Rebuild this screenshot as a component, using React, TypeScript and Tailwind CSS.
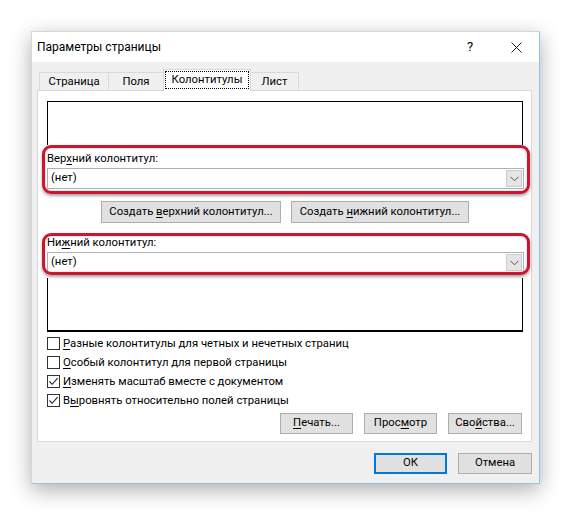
import React from "react";

const U = ({ children }: { children: React.ReactNode }) => (
  <span className="underline underline-offset-[2px] decoration-1">{children}</span>
);

function Btn({
  className,
  children,
  primary,
}: {
  className: string;
  children: React.ReactNode;
  primary?: boolean;
}) {
  return (
    <div
      className={
        "flex items-center justify-center bg-[#e1e1e1] text-black " +
        (primary ? "border-2 border-[#0078d7] " : "border border-[#adadad] ") +
        className
      }
    >
      <span className="whitespace-pre">{children}</span>
    </div>
  );
}

function Check({ checked, children }: { checked?: boolean; children: React.ReactNode }) {
  return (
    <div className="flex h-[19px] items-center">
      <div className="flex h-[13px] w-[13px] items-center justify-center border border-[#333333] bg-white">
        {checked && (
          <svg width="11" height="11" viewBox="0 0 11 11">
            <path d="M1.5 5.5 L4.2 8.3 L9.6 2.2" fill="none" stroke="#222" strokeWidth="1.1" />
          </svg>
        )}
      </div>
      <span className="ml-[3px] leading-none">{children}</span>
    </div>
  );
}

function Combo() {
  return (
    <div className="flex h-[21px] w-full items-stretch border border-[#b0b0b0] bg-white">
      <div className="flex flex-1 items-center pl-[3px]">(нет)</div>
      <div className="m-px flex w-[16px] items-center justify-center border border-[#cccccc] bg-[#e5e5e5]">
        <svg width="9" height="6" viewBox="0 0 9 6">
          <path d="M0.5 0.8 L4.5 4.8 L8.5 0.8" fill="none" stroke="#555" strokeWidth="1" />
        </svg>
      </div>
    </div>
  );
}

function Highlight({ className }: { className: string }) {
  return (
    <div
      className={
        "pointer-events-none absolute rounded-[9px] border-[3px] border-[#cc1530] shadow-[inset_0_0_2px_rgba(255,140,150,0.7),0_2px_3px_rgba(0,0,0,0.35)] " +
        className
      }
    />
  );
}

export default function App() {
  return (
    <div className="h-[518px] w-[572px] overflow-hidden bg-white pl-[31px] pt-[31px] font-['Roboto',sans-serif] text-[11.3px] text-black">
      <div className="flex h-[453px] w-[509px] flex-col border border-[#d6d6d6] border-b-[#8fc3e6] border-r-[#8fc3e6] shadow-[0_6px_20px_rgba(0,0,0,0.32)]">
        {/* Title bar */}
        <div className="flex h-[30px] items-center bg-white">
          <div className="pl-[5px] text-[12px]">Параметры страницы</div>
          <div className="ml-auto flex h-full">
            <div className="flex w-[46px] items-center justify-center text-[13px]">?</div>
            <div className="flex w-[46px] items-center justify-center">
              <svg width="11" height="11" viewBox="0 0 11 11">
                <path d="M0.5 0.5 L10.5 10.5 M10.5 0.5 L0.5 10.5" stroke="#222" strokeWidth="1" />
              </svg>
            </div>
          </div>
        </div>

        {/* Body */}
        <div className="flex flex-1 flex-col bg-[#f0f0f0] pl-[5px] pr-[7px] pt-[7px]">
          {/* Tabs */}
          <div className="flex h-[21px] items-end pl-[2px]">
            <div className="flex h-[18px] w-[69px] items-center justify-center border-l border-t border-[#d9d9d9] bg-[#f0f0f0] pt-[1px]">
              Страница
            </div>
            <div className="flex h-[18px] w-[55px] items-center justify-center border-l border-t border-[#d9d9d9] bg-[#f0f0f0] pt-[1px]">
              Поля
            </div>
            <div className="relative z-10 -mb-px flex h-[22px] w-[88px] items-start border-l border-r border-t border-[#d9d9d9] bg-white p-[1px]">
              <div className="flex h-[18px] w-full items-center justify-center border border-dotted border-black">
                Колонтитулы
              </div>
            </div>
            <div className="flex h-[18px] w-[48px] items-center justify-center border-r border-t border-[#d9d9d9] bg-[#f0f0f0] pt-[1px]">
              Лист
            </div>
          </div>

          {/* Panel */}
          <div className="flex h-[352px] flex-col border border-[#d9d9d9] bg-white pl-[9px] pr-[7px] pt-[10px]">
            <div className="h-[44px] w-[476px] border border-black border-b-0" />

            <div className="relative mt-[7px]">
              <Highlight className="-bottom-[5px] -left-[5px] -right-[6px] -top-[7px]" />
              <div className="flex h-[15px] items-center">
                <span>
                  Вер<U>х</U>ний колонтитул:
                </span>
              </div>
              <div className="mt-[1px]">
                <Combo />
              </div>
            </div>

            <div className="mt-[12px] flex justify-center gap-[10px] pr-[1px]">
              <Btn className="h-[22px] w-[180px]">
                Создать <U>в</U>ерхний колонтитул...
              </Btn>
              <Btn className="h-[22px] w-[178px]">
                Создать <U>н</U>ижний колонтитул...
              </Btn>
            </div>

            <div className="relative mt-[12px]">
              <Highlight className="-bottom-[2px] -left-[5px] -right-[6px] -top-[2px]" />
              <div className="flex h-[16px] items-center">
                <span>
                  Ни<U>ж</U>ний колонтитул:
                </span>
              </div>
              <div className="mt-[1px]">
                <Combo />
              </div>
            </div>

            <div className="mt-[5px] h-[54px] w-[476px] border border-t-0 border-black border-b-2" />

            <div className="mt-[2px] flex flex-col">
              <Check>
                <U>Р</U>азные колонтитулы для четных и нечетных страниц
              </Check>
              <Check>
                <U>О</U>собый колонтитул для первой страницы
              </Check>
              <Check checked>
                <U>И</U>зменять масштаб вместе с документом
              </Check>
              <Check checked>
                В<U>ы</U>ровнять относительно полей страницы
              </Check>
            </div>

            <div className="mt-[3px] flex justify-end gap-[11px] pr-[2px]">
              <Btn className="h-[21px] w-[73px]">
                <U>П</U>ечать...
              </Btn>
              <Btn className="h-[21px] w-[73px]">
                Прос<U>м</U>отр
              </Btn>
              <Btn className="h-[21px] w-[74px]">
                Сво<U>й</U>ства...
              </Btn>
            </div>
          </div>

          {/* Footer */}
          <div className="mt-[11px] flex justify-end gap-[11px]">
            <Btn primary className="h-[21px] w-[73px]">
              ОК
            </Btn>
            <Btn className="h-[21px] w-[74px]">Отмена</Btn>
          </div>
        </div>
      </div>
    </div>
  );
}
